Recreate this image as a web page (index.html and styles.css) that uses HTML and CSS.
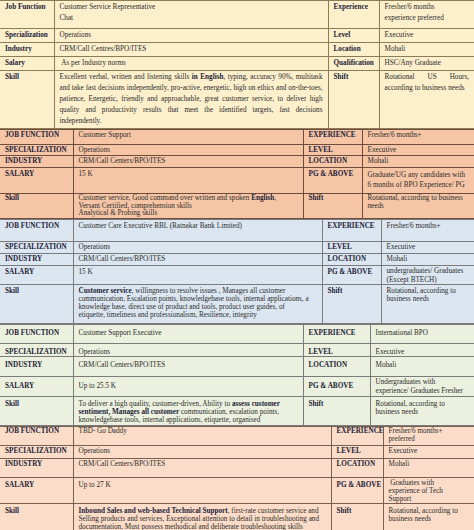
FILE: index.html
```html
<!DOCTYPE html>
<html>
<head>
<meta charset="utf-8">
<title>Job openings</title>
<link rel="stylesheet" href="styles.css">
</head>
<body>
<table class="jt t1">
  <colgroup><col class="c1"><col class="c2"><col class="c3"><col class="c4"></colgroup>
  <tr class="r1"><th>Job Function</th><td>Customer Service Representative<br>Chat</td><th>Experience</th><td>Fresher/6 months<br>experience preferred</td></tr>
  <tr class="r2"><th>Specialization</th><td>Operations</td><th>Level</th><td>Executive</td></tr>
  <tr class="r3"><th>Industry</th><td>CRM/Call Centres/BPO/ITES</td><th>Location</th><td>Mohali</td></tr>
  <tr class="r4"><th>Salary</th><td>&nbsp;As per Industry norms</td><th>Qualification</th><td>HSC/Any Graduate</td></tr>
  <tr class="r5"><th>Skill</th><td><span class="jl">Excellent verbal, written and listening skills <b>in English</b>, typing, accuracy 90%, multitask</span><span class="jl">and take fast decisions independently, pro-active, energetic, high on ethics and on-the-toes,</span><span class="jl">patience, Energetic, friendly and approachable, great customer service, to deliver high</span><span class="jl">quality and productivity results that meet the identified targets, fast decisions</span><span class="ll">independently.</span></td><th>Shift</th><td class="just">Rotational US Hours, according to business needs</td></tr>
</table>

<table class="jt t2">
  <colgroup><col class="c1"><col class="c2"><col class="c3"><col class="c4"></colgroup>
  <tr class="r1"><th>JOB FUNCTION</th><td>Customer Support</td><th>EXPERIENCE</th><td>Fresher/6 months+</td></tr>
  <tr class="r2"><th>SPECIALIZATION</th><td>Operations</td><th>LEVEL</th><td>Executive</td></tr>
  <tr class="r3"><th>INDUSTRY</th><td>CRM/Call Centers/BPO/ITES</td><th>LOCATION</th><td>Mohali</td></tr>
  <tr class="r4"><th>SALARY</th><td>15 K</td><th>PG &amp; ABOVE</th><td class="loose">Graduate/UG any candidates with<br>6 months of BPO Experience/ PG</td></tr>
  <tr class="r5"><th>Skill</th><td>Customer service, Good command over written and spoken <b>English</b>,<br>Versant Certified, comprehension skills<br>Analytical &amp; Probing skills</td><th>Shift</th><td>Rotational, according to business<br>needs</td></tr>
</table>

<table class="jt t3">
  <colgroup><col class="c1"><col class="c2"><col class="c3"><col class="c4"></colgroup>
  <tr class="r1"><th>JOB FUNCTION</th><td>Customer Care Executive RBL (Ratnakar Bank Limited)</td><th>EXPERIENCE</th><td>Fresher/6 months+</td></tr>
  <tr class="r2"><th>SPECIALIZATION</th><td>Operations</td><th>LEVEL</th><td>Executive</td></tr>
  <tr class="r3"><th>INDUSTRY</th><td>CRM/Call Centers/BPO/ITES</td><th>LOCATION</th><td>Mohali</td></tr>
  <tr class="r4"><th>SALARY</th><td>15 K</td><th>PG &amp; ABOVE</th><td class="pg">undergraduates/ Graduates<br>(Except BTECH)</td></tr>
  <tr class="r5"><th>Skill</th><td><b>Customer service</b>, willingness to resolve issues , Manages all customer<br>communication, Escalation points, knowledgebase tools, internal applications, a<br>knowledge base, direct use of product and tools, product user guides, of<br>etiquette, timeliness and professionalism, Resilience, integrity</td><th>Shift</th><td>Rotational, according to<br>business needs</td></tr>
</table>

<table class="jt t4">
  <colgroup><col class="c1"><col class="c2"><col class="c3"><col class="c4"></colgroup>
  <tr class="r1"><th>JOB FUNCTION</th><td>Customer Support Executive</td><th>EXPERIENCE</th><td>International BPO</td></tr>
  <tr class="r2"><th>SPECIALIZATION</th><td>Operations</td><th>LEVEL</th><td>Executive</td></tr>
  <tr class="r3"><th>INDUSTRY</th><td>CRM/Call Centers/BPO/ITES</td><th>LOCATION</th><td>Mohali</td></tr>
  <tr class="r4"><th>SALARY</th><td>Up to 25.5 K</td><th>PG &amp; ABOVE</th><td class="pg">Undergraduates with<br>experience/ Graduates Fresher</td></tr>
  <tr class="r5"><th>Skill</th><td>To deliver a high quality, customer-driven, Ability to <b>assess customer</b><br><b>sentiment, Manages all customer</b> communication, escalation points,<br>knowledgebase tools, internal applications, etiquette, organised</td><th>Shift</th><td>Rotational, according to<br>business needs</td></tr>
</table>

<table class="jt t5">
  <colgroup><col class="c1"><col class="c2"><col class="c3"><col class="c4"></colgroup>
  <tr class="r1"><th>JOB FUNCTION</th><td>TBD- Go Daddy</td><th>EXPERIENCE</th><td>Fresher/6 months+<br>preferred</td></tr>
  <tr class="r2"><th>SPECIALIZATION</th><td>Operations</td><th>LEVEL</th><td>Executive</td></tr>
  <tr class="r3"><th>INDUSTRY</th><td>CRM/Call Centers/BPO/ITES</td><th>LOCATION</th><td>Mohali</td></tr>
  <tr class="r4"><th>SALARY</th><td>Up to 27 K</td><th>PG &amp; ABOVE</th><td class="pg">&nbsp;Graduates with<br>experience of Tech<br>Support</td></tr>
  <tr class="r5"><th>Skill</th><td><b>Inbound Sales and web-based Technical Support</b>, first-rate customer service and<br>Selling products and services, Exceptional attention to detail in troubleshooting and<br>documentation, Must possess methodical and deliberate troubleshooting skills</td><th>Shift</th><td>Rotational, according to<br>business needs</td></tr>
</table>
</body>
</html>
```

FILE: styles.css
```css
html, body {
  margin: 0;
  padding: 0;
  background: #ffffff;
}

body {
  width: 474px;
  height: 530px;
  overflow: hidden;
  font-family: "Liberation Serif", "Times New Roman", serif;
  font-size: 7.2px;
  color: #2b2b2b;
}

.jt {
  width: 474px;
  border-collapse: collapse;
  table-layout: fixed;
}

.jt th,
.jt td {
  vertical-align: top;
  text-align: left;
  padding: 1px 5px 0 5px;
  line-height: 8px;
  border: 1px solid #7b7b7b;
  overflow: hidden;
}

.jt th {
  font-weight: bold;
  color: #1d1d38;
  white-space: nowrap;
}

.jt b {
  color: #1d1d38;
}

.jt tr > :first-child { border-left: none; }
.jt tr > :last-child { border-right: none; }

.jt .just { text-align: justify; }

.jl {
  display: block;
  white-space: nowrap;
  text-align: justify;
  text-align-last: justify;
}

.ll {
  display: block;
  white-space: nowrap;
}

/* table 1 */
.t1 { background: #fcefcb; }
.t1 th, .t1 td { border-color: #8d7c58; line-height: 11px; padding-top: 1px; }
.t1 .c1 { width: 54px; }
.t1 .c2 { width: 274px; }
.t1 .c3 { width: 51px; }
.t1 .c4 { width: 95px; }
.t1 .r1 { height: 28px; }
.t1 .r2, .t1 .r3, .t1 .r4 { height: 14px; }
.t1 .r5 { height: 58px; }

/* table 2 */
.t2 { background: #f5c5a6; }
.t2 th, .t2 td { border-color: #6e4d3c; }
.t2 .c1 { width: 73px; }
.t2 .c2 { width: 230px; }
.t2 .c3 { width: 59px; }
.t2 .c4 { width: 112px; }
.t2 .r1 { height: 15px; }
.t2 .r2 { height: 11px; }
.t2 .r3 { height: 12px; }
.t2 .r4 { height: 26px; }
.t2 .r5 { height: 25px; }
.t2 .r4 th, .t2 .r4 td { padding-top: 2px; }
.t2 .r4 .loose { line-height: 10px; }
.t2 .r5 th, .t2 .r5 td { padding-top: 1px; line-height: 7.6px; }

/* table 3 */
.t3 { background: #dce6f1; }
.t3 th, .t3 td { border-color: #7b7b7b; padding-top: 2px; }
.t3 .c1 { width: 73px; }
.t3 .c2 { width: 249px; }
.t3 .c3 { width: 59px; }
.t3 .c4 { width: 93px; }
.t3 .r1 { height: 22px; }
.t3 .r2, .t3 .r3 { height: 12px; }
.t3 .r4 { height: 19px; }
.t3 .r5 { height: 39px; }
.t3 .r2 th, .t3 .r2 td,
.t3 .r3 th, .t3 .r3 td { padding-top: 1px; }
.t3 .r4 .pg { padding-top: 1px; line-height: 8.5px; }

/* table 4 */
.t4 { background: #ebf1de; }
.t4 th, .t4 td { border-color: #7b7b7b; padding-top: 4px; }
.t4 .c1 { width: 73px; }
.t4 .c2 { width: 230px; }
.t4 .c3 { width: 67px; }
.t4 .c4 { width: 104px; }
.t4 .r1 { height: 19px; }
.t4 .r2 { height: 13px; }
.t4 .r3, .t4 .r4 { height: 20px; }
.t4 .r5 { height: 29px; }
.t4 .r4 th, .t4 .r4 td { padding-top: 5px; }
.t4 .r4 .pg { padding-top: 1px; line-height: 9px; }
.t4 .r5 th, .t4 .r5 td { padding-top: 3px; }

/* table 5 */
.t5 { background: #fadcc8; }
.t5 th, .t5 td { border-color: #7a6050; padding-top: 1px; }
.t5 .c1 { width: 73px; }
.t5 .c2 { width: 258px; }
.t5 .c3 { width: 52px; }
.t5 .c4 { width: 91px; }
.t5 .r1 { height: 19px; }
.t5 .r2 { height: 13px; }
.t5 .r3 { height: 19px; }
.t5 .r4 { height: 26px; }
.t5 .r5 { height: 40px; }
.t5 .r1 th, .t5 .r1 td { padding-top: 0; }
.t5 .r4 th, .t5 .r4 td { padding-top: 3px; }
.t5 .r4 .pg { padding-top: 1px; }
.t5 .r5 th, .t5 .r5 td { padding-top: 3px; }
```
